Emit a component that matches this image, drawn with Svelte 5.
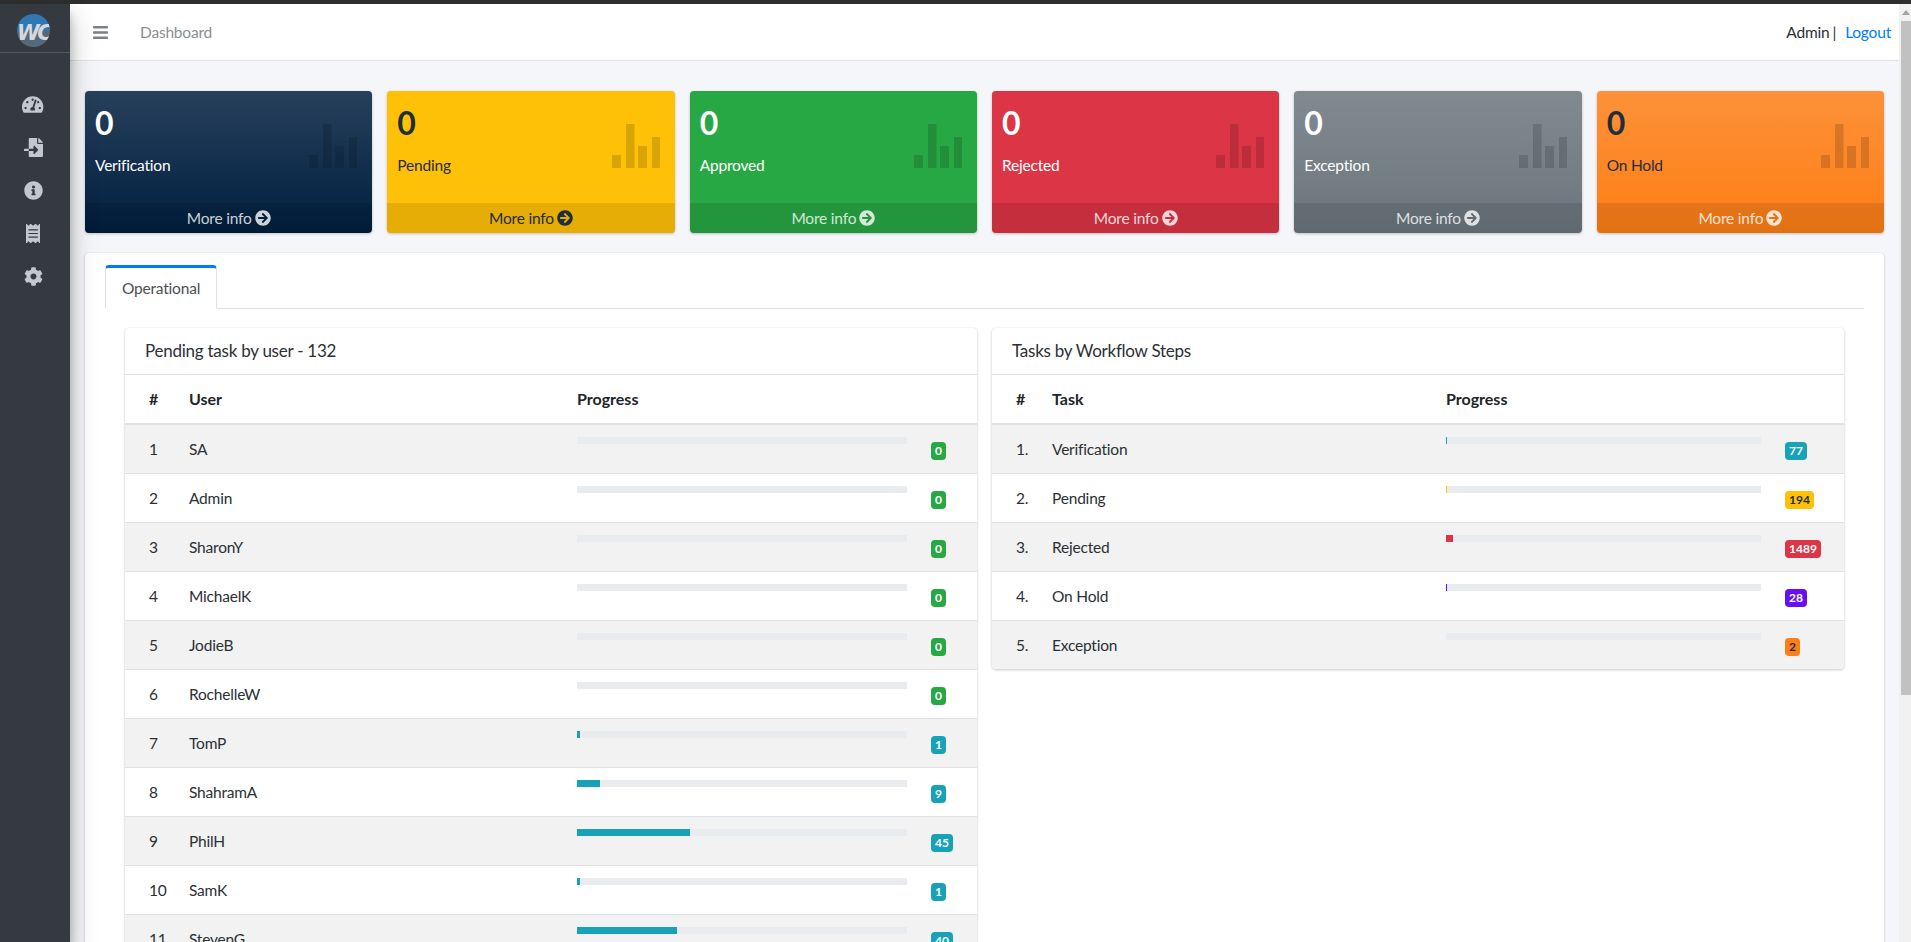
<script>
  const stats = [
    { label: 'Verification', cls: 'navy' },
    { label: 'Pending', cls: 'yellow' },
    { label: 'Approved', cls: 'green' },
    { label: 'Rejected', cls: 'red' },
    { label: 'Exception', cls: 'grey' },
    { label: 'On Hold', cls: 'orange' }
  ];
  const users = [
    ['SA', 0], ['Admin', 0], ['SharonY', 0], ['MichaelK', 0], ['JodieB', 0], ['RochelleW', 0],
    ['TomP', 1], ['ShahramA', 9], ['PhilH', 45], ['SamK', 1], ['StevenG', 40]
  ];
  const steps = [
    { name: 'Verification', n: 77, pct: 0.32, cls: 'teal' },
    { name: 'Pending', n: 194, pct: 0.32, cls: 'yellow' },
    { name: 'Rejected', n: 1489, pct: 2.2, cls: 'red' },
    { name: 'On Hold', n: 28, pct: 0.32, cls: 'purple' },
    { name: 'Exception', n: 2, pct: 0, cls: 'orange' }
  ];
</script>

<div class="shell">
  <div class="stripe"></div>
  <div class="frame">
    <aside class="sidebar">
      <div class="brand">
        <svg class="logo" viewBox="0 0 32 32" aria-label="WC logo">
          <defs>
            <linearGradient id="lg" x1="0" y1="0" x2="0" y2="1">
              <stop offset="0.47" stop-color="#2f78b4" />
              <stop offset="0.53" stop-color="#56697a" />
            </linearGradient>
            <clipPath id="lc"><circle cx="16" cy="16" r="16" /></clipPath>
          </defs>
          <circle cx="16" cy="16" r="16" fill="url(#lg)" />
          <g clip-path="url(#lc)">
            <text x="0" y="25" class="logo-text">WC</text>
          </g>
        </svg>
      </div>
      <nav class="nav">
        <svg class="ico" viewBox="0 0 576 512"><path d="M288 32C128.94 32 0 160.94 0 320c0 52.8 14.25 102.26 39.06 144.8 5.61 9.62 16.3 15.2 27.44 15.2h443c11.14 0 21.83-5.58 27.44-15.2C561.75 422.26 576 372.8 576 320c0-159.06-128.94-288-288-288zm0 64c14.71 0 26.58 10.13 30.32 23.65-1.11 2.26-2.64 4.23-3.38 6.67l-9.21 27.63c-5.5 3.3-11.53 5.76-17.73 5.76-17.67 0-32-14.33-32-32S270.33 96 288 96zM96 384c-17.67 0-32-14.33-32-32s14.33-32 32-32 32 14.33 32 32-14.33 32-32 32zm48-160c-17.67 0-32-14.33-32-32s14.33-32 32-32 32 14.33 32 32-14.33 32-32 32zm246.77-72.41l-61.33 184C343.13 347.33 352 364.54 352 384c0 11.72-3.38 22.55-8.88 32H232.88c-5.5-9.45-8.88-20.28-8.88-32 0-33.94 26.5-61.43 59.9-63.59l61.34-184.01c4.17-12.56 17.73-19.45 30.36-15.17 12.57 4.19 19.35 17.79 15.17 30.36zm14.66 57.2l15.52-46.55c3.47-1.29 7.13-2.23 11.05-2.23 17.67 0 32 14.33 32 32s-14.33 32-32 32c-11.38-.01-20.89-6.28-26.57-15.22zM480 384c-17.67 0-32-14.33-32-32s14.33-32 32-32 32 14.33 32 32-14.33 32-32 32z"/></svg>
        <svg class="ico" viewBox="0 0 512 512"><path d="M16 288c-8.8 0-16 7.2-16 16v32c0 8.8 7.2 16 16 16h112v-64zm489-183L407.1 7c-4.5-4.5-10.6-7-17-7H384v128h128v-6.1c0-6.3-2.5-12.4-7-16.9zm-153 31V0H152c-13.3 0-24 10.7-24 24v264h128v-65.2c0-14.3 17.3-21.4 27.4-11.3L379 308c6.6 6.7 6.6 17.4 0 24l-95.7 96.4c-10.1 10.1-27.4 3-27.4-11.3V352H128v136c0 13.3 10.7 24 24 24h336c13.3 0 24-10.7 24-24V160H376c-13.2 0-24-10.8-24-24z"/></svg>
        <svg class="ico" viewBox="0 0 512 512"><path d="M256 8C119.043 8 8 119.083 8 256c0 136.997 111.043 248 248 248s248-111.003 248-248C504 119.083 392.957 8 256 8zm0 110c23.196 0 42 18.804 42 42s-18.804 42-42 42-42-18.804-42-42 18.804-42 42-42zm56 254c0 6.627-5.373 12-12 12h-88c-6.627 0-12-5.373-12-12v-24c0-6.627 5.373-12 12-12h12v-64h-12c-6.627 0-12-5.373-12-12v-24c0-6.627 5.373-12 12-12h64c6.627 0 12 5.373 12 12v100h12c6.627 0 12 5.373 12 12v24z"/></svg>
        <svg class="ico" viewBox="0 0 384 512"><path d="M358.4 3.2L320 48 265.6 3.2a15.9 15.9 0 0 0-19.2 0L192 48 137.6 3.2a15.9 15.9 0 0 0-19.2 0L64 48 25.6 3.2C15-4.7 0 2.8 0 16v480c0 13.2 15 20.7 25.6 12.8L64 464l54.4 44.8a15.9 15.9 0 0 0 19.2 0L192 464l54.4 44.8a15.9 15.9 0 0 0 19.2 0L320 464l38.4 44.8c10.5 7.9 25.6.4 25.6-12.8V16c0-13.2-15-20.7-25.6-12.8zM320 360c0 4.4-3.6 8-8 8H72c-4.4 0-8-3.6-8-8v-16c0-4.4 3.6-8 8-8h240c4.4 0 8 3.6 8 8v16zm0-96c0 4.4-3.6 8-8 8H72c-4.4 0-8-3.6-8-8v-16c0-4.4 3.6-8 8-8h240c4.4 0 8 3.6 8 8v16zm0-96c0 4.4-3.6 8-8 8H72c-4.4 0-8-3.6-8-8v-16c0-4.4 3.6-8 8-8h240c4.4 0 8 3.6 8 8v16z"/></svg>
        <svg class="ico" viewBox="0 0 512 512"><path d="M487.4 315.7l-42.6-24.6c4.3-23.2 4.3-47 0-70.2l42.6-24.6c4.9-2.8 7.1-8.6 5.5-14-11.1-35.6-30-67.8-54.7-94.6-3.8-4.1-10-5.1-14.8-2.3L380.8 110c-17.9-15.4-38.5-27.3-60.8-35.1V25.8c0-5.6-3.9-10.5-9.4-11.7-36.7-8.2-74.3-7.8-109.2 0-5.5 1.2-9.4 6.1-9.4 11.7V75c-22.2 7.9-42.8 19.8-60.8 35.1L88.7 85.5c-4.9-2.8-11-1.9-14.8 2.3-24.7 26.7-43.6 58.9-54.7 94.6-1.7 5.4.6 11.2 5.5 14L67.3 221c-4.3 23.2-4.3 47 0 70.2l-42.6 24.6c-4.9 2.8-7.1 8.6-5.5 14 11.1 35.6 30 67.8 54.7 94.6 3.8 4.1 10 5.1 14.8 2.3l42.6-24.6c17.9 15.4 38.5 27.3 60.8 35.1v49.2c0 5.6 3.9 10.5 9.4 11.7 36.7 8.2 74.3 7.8 109.2 0 5.5-1.2 9.4-6.1 9.4-11.7v-49.2c22.2-7.9 42.8-19.8 60.8-35.1l42.6 24.6c4.9 2.8 11 1.9 14.8-2.3 24.7-26.7 43.6-58.9 54.7-94.6 1.5-5.5-.7-11.3-5.6-14.1zM256 336c-44.1 0-80-35.9-80-80s35.9-80 80-80 80 35.9 80 80-35.9 80-80 80z"/></svg>
      </nav>
    </aside>

    <main class="main">
      <header class="topbar">
        <svg class="bars" viewBox="0 0 448 512"><path d="M16 132h416c8.837 0 16-7.163 16-16V76c0-8.837-7.163-16-16-16H16C7.163 60 0 67.163 0 76v40c0 8.837 7.163 16 16 16zm0 160h416c8.837 0 16-7.163 16-16v-40c0-8.837-7.163-16-16-16H16c-8.837 0-16 7.163-16 16v40c0 8.837 7.163 16 16 16zm0 160h416c8.837 0 16-7.163 16-16v-40c0-8.837-7.163-16-16-16H16c-8.837 0-16 7.163-16 16v40c0 8.837 7.163 16 16 16z"/></svg>
        <span class="crumb">Dashboard</span>
        <span class="who">Admin</span>
        <span class="sep">|</span>
        <a class="logout" href="#logout">Logout</a>
      </header>

      <section class="stats">
        {#each stats as s}
          <div class="stat {s.cls}">
            <div class="stat-body">
              <div class="num">0</div>
              <div class="lbl">{s.label}</div>
              <svg class="chart" viewBox="0 0 48 44"><rect x="0" y="31" width="9" height="13"/><rect x="14" y="0" width="8.5" height="44"/><rect x="26" y="22" width="9" height="22"/><rect x="40" y="13" width="8" height="31"/></svg>
            </div>
            <div class="stat-foot">
              <span>More info</span>
              <svg class="arrow" viewBox="0 0 512 512"><path d="M256 8c137 0 248 111 248 248S393 504 256 504 8 393 8 256 119 8 256 8zm-28.9 143.6l75.5 72.4H120c-13.3 0-24 10.7-24 24v16c0 13.3 10.7 24 24 24h182.6l-75.5 72.4c-9.7 9.3-9.9 24.8-.4 34.3l11 10.9c9.4 9.4 24.6 9.4 33.9 0L404.3 273c9.4-9.4 9.4-24.6 0-33.9L271.6 106.3c-9.4-9.4-24.6-9.4-33.9 0l-11 10.9c-9.5 9.6-9.3 25.1.4 34.4z"/></svg>
            </div>
          </div>
        {/each}
      </section>

      <section class="panel">
        <div class="tabs"><div class="tab">Operational</div></div>
        <div class="grid">
          <div class="card">
            <div class="card-head">Pending task by user - 132</div>
            <table>
              <colgroup><col class="c-n1" /><col class="c-u" /><col class="c-p1" /><col /></colgroup>
              <thead><tr><th class="first">#</th><th>User</th><th>Progress</th><th></th></tr></thead>
              <tbody>
                {#each users as [name, n], i}
                  <tr>
                    <td class="first">{i + 1}</td>
                    <td>{name}</td>
                    <td><div class="track"><div class="fill teal" style="width:{(n / 132) * 100}%"></div></div></td>
                    <td><span class="badge {n === 0 ? 'green' : 'teal'}">{n}</span></td>
                  </tr>
                {/each}
              </tbody>
            </table>
          </div>
          <div class="card short">
            <div class="card-head">Tasks by Workflow Steps</div>
            <table>
              <colgroup><col class="c-n2" /><col class="c-t" /><col class="c-p2" /><col /></colgroup>
              <thead><tr><th class="first">#</th><th>Task</th><th>Progress</th><th></th></tr></thead>
              <tbody>
                {#each steps as s, i}
                  <tr>
                    <td class="first">{i + 1}.</td>
                    <td>{s.name}</td>
                    <td><div class="track"><div class="fill {s.cls}" style="width:{s.pct}%"></div></div></td>
                    <td><span class="badge {s.cls}">{s.n}</span></td>
                  </tr>
                {/each}
              </tbody>
            </table>
          </div>
        </div>
      </section>
    </main>

    <div class="scrollbar">
      <div class="sb-arrow"></div>
      <div class="sb-thumb"></div>
    </div>
  </div>
</div>

<style>
  :global(body) {
    margin: 0;
    overflow: hidden;
  }
  .shell {
    height: 942px;
    display: flex;
    flex-direction: column;
    overflow: hidden;
    font-family: "Lato", "Liberation Sans", sans-serif;
    font-size: 15.5px;
    letter-spacing: -0.2px;
    line-height: 24px;
    color: #2b3035;
    background: #f4f6f9;
  }
  .stripe {
    height: 4px;
    flex: none;
    background: #2e2e2e;
  }
  .frame {
    flex: 1;
    display: flex;
    min-height: 0;
  }
  .sidebar {
    width: 70px;
    flex: none;
    background: #343a40;
    position: relative;
    z-index: 2;
    box-shadow: 0 14px 28px rgba(0, 0, 0, 0.25), 0 10px 10px rgba(0, 0, 0, 0.22);
  }
  .brand {
    height: 49px;
    border-bottom: 1px solid #4f5962;
    display: flex;
    justify-content: center;
    padding: 10px 4px 0 0;
    box-sizing: border-box;
  }
  .logo {
    width: 33px;
    height: 33px;
  }
  .logo-text {
    font-family: "DejaVu Sans", sans-serif;
    font-weight: 700;
    font-style: italic;
    font-size: 20px;
    letter-spacing: -2.5px;
    fill: #d6d8db;
  }
  .nav {
    display: flex;
    flex-direction: column;
    align-items: center;
    padding: 42px 4px 0 0;
    gap: 24px;
  }
  .ico {
    height: 19px;
    width: auto;
    fill: #c2c7d0;
  }
  .main {
    flex: 1;
    min-width: 0;
  }
  .topbar {
    height: 56px;
    background: #fff;
    border-bottom: 1px solid #dee2e6;
    display: flex;
    align-items: center;
    padding: 0 8px 0 23px;
  }
  .bars {
    width: 15px;
    height: 17px;
    fill: #7b8187;
  }
  .crumb {
    margin-left: 32px;
    color: #8a8f94;
  }
  .who {
    margin-left: auto;
  }
  .sep {
    margin: 0 9px 0 3px;
  }
  .logout {
    color: #007bff;
    text-decoration: none;
  }
  .stats {
    display: grid;
    grid-template-columns: repeat(6, 1fr);
    gap: 15px;
    padding: 30px 15px 20px;
  }
  .stat {
    height: 142px;
    border-radius: 4px;
    display: flex;
    flex-direction: column;
    overflow: hidden;
    box-shadow: 0 0 1px rgba(0, 0, 0, 0.125), 0 1px 3px rgba(0, 0, 0, 0.2);
    color: #fff;
  }
  .stat-body {
    flex: 1;
    position: relative;
    padding: 12px 10px 10px;
  }
  .num {
    font-size: 32px;
    font-weight: 700;
    line-height: 40px;
    letter-spacing: 0;
    margin-bottom: 10px;
  }
  .chart {
    position: absolute;
    right: 15px;
    top: 33px;
    width: 48px;
    height: 44px;
    fill: rgba(0, 0, 0, 0.15);
  }
  .stat-foot {
    height: 30px;
    flex: none;
    background: rgba(0, 0, 0, 0.1);
    color: rgba(255, 255, 255, 0.8);
    display: flex;
    align-items: center;
    justify-content: center;
    gap: 3px;
  }
  .arrow {
    width: 16px;
    height: 16px;
    fill: rgba(255, 255, 255, 0.8);
  }
  .stat.navy {
    background: linear-gradient(180deg, #27405c, #001f3f);
  }
  .stat.yellow {
    background: #ffc107;
    color: #1f2d3d;
  }
  .stat.yellow .stat-foot {
    color: #1f2d3d;
  }
  .stat.yellow .arrow {
    fill: #1f2d3d;
  }
  .stat.green {
    background: #28a745;
  }
  .stat.red {
    background: #dc3545;
  }
  .stat.grey {
    background: linear-gradient(180deg, #828a91, #6c757d);
  }
  .stat.orange {
    background: linear-gradient(180deg, #fd9139, #fd7e14);
    color: #1f2d3d;
  }
  .panel {
    margin: 0 15px;
    background: #fff;
    border-radius: 4px;
    box-shadow: 0 0 1px rgba(0, 0, 0, 0.125), 0 1px 3px rgba(0, 0, 0, 0.2);
    padding: 12px 20px 20px;
  }
  .tabs {
    border-bottom: 1px solid #dee2e6;
    display: flex;
  }
  .tab {
    border: 1px solid #dee2e6;
    border-top: 3px solid #007bff;
    border-bottom-color: #fff;
    border-radius: 4px 4px 0 0;
    padding: 8px 16px;
    margin-bottom: -1px;
    color: #495057;
    background: #fff;
  }
  .grid {
    display: grid;
    grid-template-columns: 852px 852px;
    gap: 15px;
    padding: 19px 20px 0;
    align-items: start;
  }
  .card {
    border-radius: 4px;
    background: #fff;
    box-shadow: 0 0 1px rgba(0, 0, 0, 0.125), 0 1px 3px rgba(0, 0, 0, 0.2);
    overflow: hidden;
  }
  .card-head {
    height: 24px;
    padding: 11px 20px;
    font-size: 17px;
    letter-spacing: -0.25px;
    border-bottom: 1px solid #dee2e6;
  }
  table {
    width: 100%;
    table-layout: fixed;
    border-collapse: collapse;
  }
  .c-n1 {
    width: 52px;
  }
  .c-u {
    width: 388px;
  }
  .c-p1 {
    width: 354px;
  }
  .c-n2 {
    width: 48px;
  }
  .c-t {
    width: 394px;
  }
  .c-p2 {
    width: 339px;
  }
  th {
    text-align: left;
    font-weight: 700;
    font-size: 16px;
    letter-spacing: 0;
    padding: 12px;
    border-bottom: 2px solid #dee2e6;
    color: #212529;
  }
  td {
    padding: 12px;
    vertical-align: top;
    border-top: 1px solid #dee2e6;
  }
  .first {
    padding-left: 24px;
  }
  tbody tr:nth-child(odd) {
    background: #f2f2f2;
  }
  .track {
    height: 7px;
    background: #e9ecef;
    display: flex;
  }
  .fill {
    height: 100%;
    min-width: 0;
  }
  .fill.teal {
    background: #17a2b8;
  }
  .fill.yellow {
    background: #ffc107;
  }
  .fill.red {
    background: #dc3545;
  }
  .fill.purple {
    background: #6610f2;
  }
  .fill.orange {
    background: #fd7e14;
  }
  .badge {
    display: block;
    width: fit-content;
    margin-top: 5px;
    height: 18px;
    line-height: 18px;
    padding: 0 4px;
    border-radius: 4px;
    font-size: 12px;
    letter-spacing: 0;
    font-weight: 700;
    color: #fff;
  }
  .badge.green {
    background: #28a745;
  }
  .badge.teal {
    background: #17a2b8;
  }
  .badge.yellow {
    background: #ffc107;
    color: #1f2d3d;
  }
  .badge.red {
    background: #dc3545;
  }
  .badge.purple {
    background: #6610f2;
  }
  .badge.orange {
    background: #fd7e14;
    color: #1f2d3d;
  }
  .scrollbar {
    width: 12px;
    flex: none;
    background: #f1f1f1;
    padding-left: 2px;
    box-sizing: border-box;
  }
  .sb-arrow {
    height: 17px;
    position: relative;
  }
  .sb-arrow::after {
    content: "";
    position: absolute;
    left: 1px;
    top: 6px;
    border: 4px solid transparent;
    border-top: 0;
    border-bottom: 5px solid #a3a3a3;
  }
  .sb-thumb {
    height: 674px;
    background: #c1c1c1;
  }
</style>
